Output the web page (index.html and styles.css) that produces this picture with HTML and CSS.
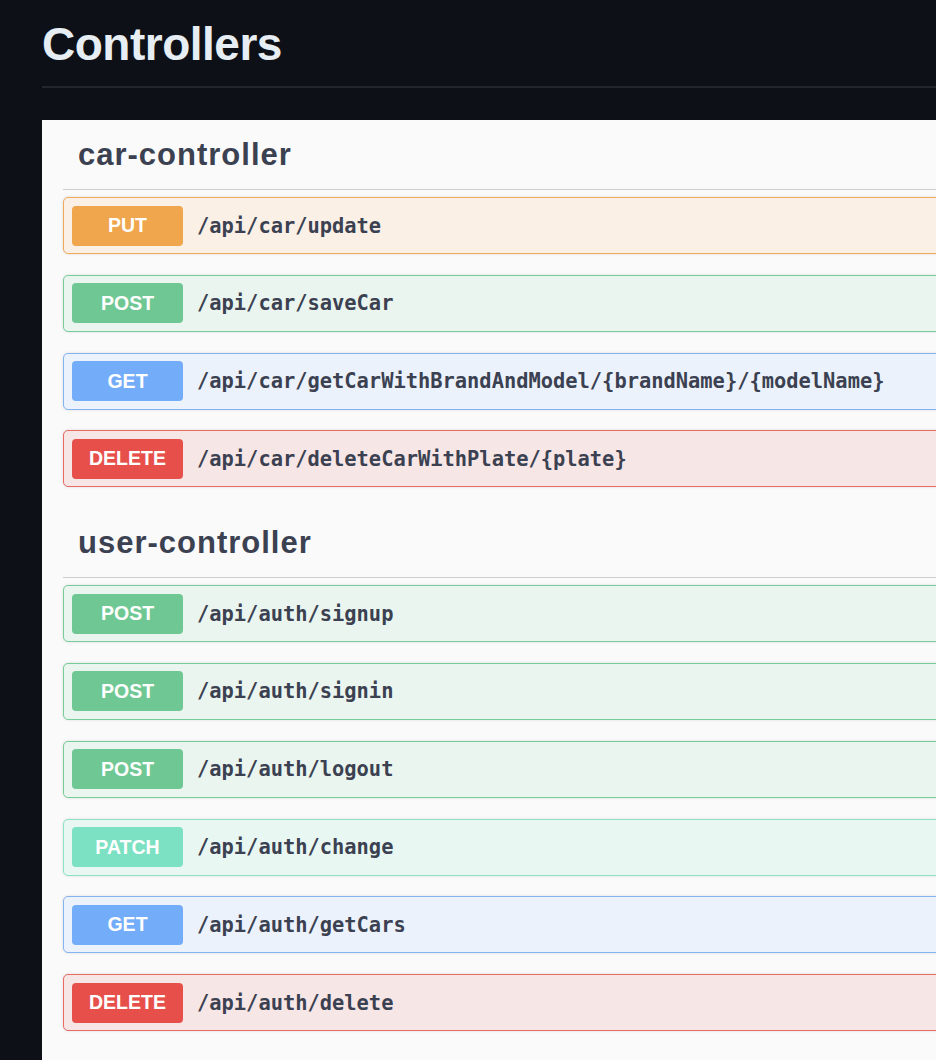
FILE: index.html
```html
<!DOCTYPE html>
<html lang="en">
<head>
<meta charset="utf-8">
<title>Controllers</title>
<link rel="stylesheet" href="styles.css">
</head>
<body>
<main class="page">
  <h1 class="title">Controllers</h1>
  <section class="panel">
    <div class="tag-group">
      <h3 class="tag">car-controller</h3>
      <div class="op op-put"><span class="method">PUT</span><span class="path">/api/car/update</span></div>
      <div class="op op-post"><span class="method">POST</span><span class="path">/api/car/saveCar</span></div>
      <div class="op op-get"><span class="method">GET</span><span class="path">/api/car/getCarWithBrandAndModel/{brandName}/{modelName}</span></div>
      <div class="op op-delete"><span class="method">DELETE</span><span class="path">/api/car/deleteCarWithPlate/{plate}</span></div>
    </div>
    <div class="tag-group">
      <h3 class="tag">user-controller</h3>
      <div class="op op-post"><span class="method">POST</span><span class="path">/api/auth/signup</span></div>
      <div class="op op-post"><span class="method">POST</span><span class="path">/api/auth/signin</span></div>
      <div class="op op-post"><span class="method">POST</span><span class="path">/api/auth/logout</span></div>
      <div class="op op-patch"><span class="method">PATCH</span><span class="path">/api/auth/change</span></div>
      <div class="op op-get"><span class="method">GET</span><span class="path">/api/auth/getCars</span></div>
      <div class="op op-delete"><span class="method">DELETE</span><span class="path">/api/auth/delete</span></div>
    </div>
  </section>
</main>
</body>
</html>
```
FILE: styles.css
```css
html, body {
  margin: 0;
  padding: 0;
  background: #0d1117;
  overflow: hidden;
  height: 100%;
}

.page {
  padding-left: 42px;
  padding-top: 12px;
  font-family: "Liberation Sans", Arial, sans-serif;
}

.title {
  margin: 0;
  color: #e6edf3;
  font-size: 46px;
  font-weight: 700;
  letter-spacing: -0.5px;
  line-height: 64px;
  padding-bottom: 10px;
  border-bottom: 2px solid #22272e;
}

.panel {
  margin-top: 32px;
  width: 1100px;
  background: #fafafa;
  padding: 0 0 40px 21px;
  min-height: 960px;
}

.tag-group {
  display: flex;
  flex-direction: column;
}

.tag {
  margin: 0 0 7px 0;
  height: 70px;
  box-sizing: border-box;
  padding: 0 0 0 15px;
  display: flex;
  align-items: center;
  border-bottom: 1px solid #cdced1;
  color: #3b4151;
  font-size: 31px;
  font-weight: 700;
  letter-spacing: 1px;
}

.op {
  display: flex;
  align-items: center;
  height: 57px;
  box-sizing: border-box;
  margin-bottom: 20.8px;
  border: 1px solid;
  border-radius: 5px;
  padding: 0 8px;
  box-shadow: 0 0 3px rgba(0, 0, 0, 0.12);
}

.method {
  width: 111px;
  height: 40px;
  border-radius: 4px;
  display: flex;
  align-items: center;
  justify-content: center;
  color: #fff;
  font-size: 19.5px;
  font-weight: 700;
  font-family: "Liberation Sans", Arial, sans-serif;
}

.path {
  margin-left: 14px;
  color: #3b4151;
  font-family: "DejaVu Sans Mono", "Liberation Mono", monospace;
  font-size: 20.4px;
  font-weight: 700;
}

.op-put { background: #faf0e6; border-color: #efaa5a; }
.op-put .method { background: #efa64c; }

.op-post { background: #e9f5ee; border-color: #77cc9a; }
.op-post .method { background: #6fc894; }

.op-get { background: #ebf2fb; border-color: #84b3f0; }
.op-get .method { background: #73acf8; }

.op-delete { background: #f7e6e6; border-color: #ea6a64; }
.op-delete .method { background: #e7504a; }

.op-patch { background: #e9f7f3; border-color: #8ce1c8; }
.op-patch .method { background: #7ce0c3; }
```
